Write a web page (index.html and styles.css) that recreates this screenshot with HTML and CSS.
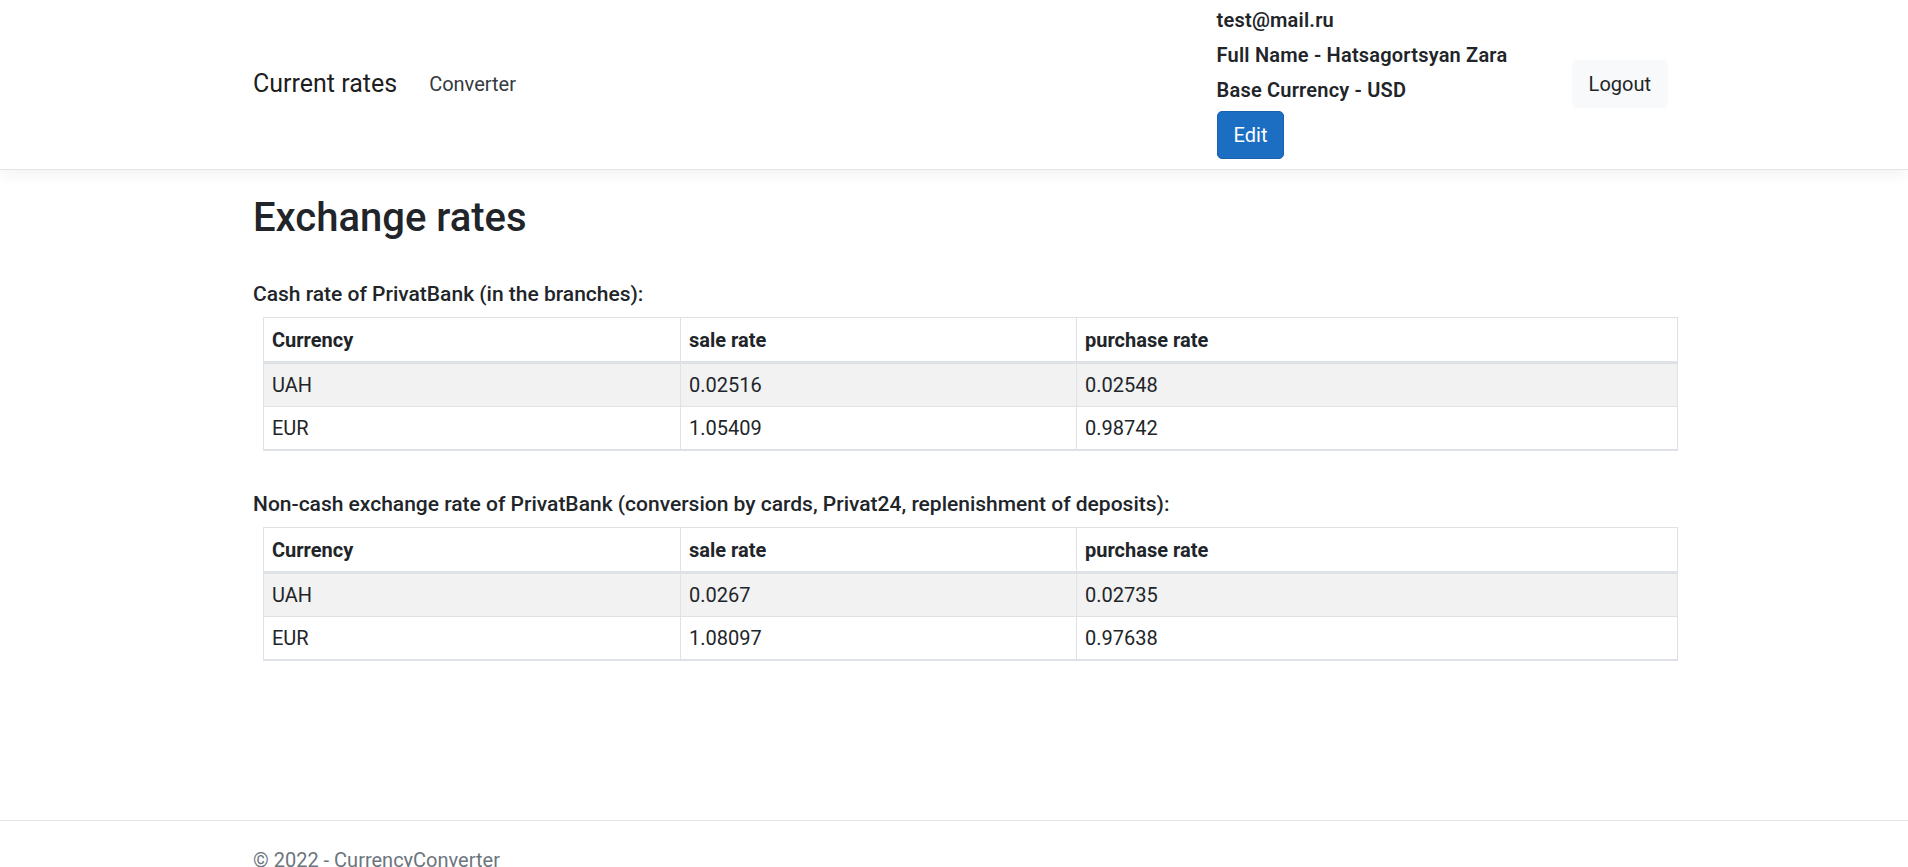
FILE: index.html
```html
<!DOCTYPE html>
<html lang="en">
<head>
<meta charset="utf-8">
<title>Exchange rates - CurrencyConverter</title>
<link rel="stylesheet" href="styles.css">
</head>
<body>
<div class="page">
  <header class="navbar">
    <div class="container nav-inner">
      <a class="brand" href="#">Current rates</a>
      <a class="nav-link" href="#">Converter</a>
      <div class="user">
        <div class="user-line">test@mail.ru</div>
        <div class="user-line">Full Name - Hatsagortsyan Zara</div>
        <div class="user-line">Base Currency - USD</div>
        <button class="btn btn-primary" type="button">Edit</button>
      </div>
      <button class="btn btn-light" type="button">Logout</button>
    </div>
  </header>

  <main class="container main">
    <h2 class="title">Exchange rates</h2>

    <p class="label">Cash rate of PrivatBank (in the branches):</p>
    <table class="rates">
      <thead>
        <tr><th class="c1">Currency</th><th class="c2">sale rate</th><th class="c3">purchase rate</th></tr>
      </thead>
      <tbody>
        <tr class="odd"><td>UAH</td><td>0.02516</td><td>0.02548</td></tr>
        <tr><td>EUR</td><td>1.05409</td><td>0.98742</td></tr>
      </tbody>
    </table>

    <p class="label">Non-cash exchange rate of PrivatBank (conversion by cards, Privat24, replenishment of deposits):</p>
    <table class="rates">
      <thead>
        <tr><th class="c1">Currency</th><th class="c2">sale rate</th><th class="c3">purchase rate</th></tr>
      </thead>
      <tbody>
        <tr class="odd"><td>UAH</td><td>0.0267</td><td>0.02735</td></tr>
        <tr><td>EUR</td><td>1.08097</td><td>0.97638</td></tr>
      </tbody>
    </table>
  </main>

  <footer class="footer">
    <div class="container">&copy; 2022 - CurrencyConverter</div>
  </footer>
</div>
</body>
</html>
```
FILE: styles.css
```css
html, body {
  margin: 0;
  padding: 0;
}
body {
  font-family: Roboto, "Liberation Sans", Arial, sans-serif;
  font-size: 20px;
  line-height: 30px;
  color: #212529;
  background: #fff;
}
.page {
  min-height: 899px;
  display: flex;
  flex-direction: column;
}
.container {
  box-sizing: border-box;
  width: 1448px;
  margin: 0 auto;
  padding: 0 0 0 23px;
}

/* navbar */
.navbar {
  padding: 8px 0 10px;
  border-bottom: 1px solid #e5e5e5;
  box-shadow: 0 5px 15px rgba(0, 0, 0, 0.05);
  background: #fff;
}
.nav-inner {
  display: flex;
  align-items: center;
  padding-right: 10px;
}
.brand {
  font-size: 25px;
  line-height: 37px;
  color: rgba(0, 0, 0, 0.9);
  text-decoration: none;
  margin-right: 32px;
}
.nav-link {
  font-size: 20px;
  color: #343a40;
  text-decoration: none;
}
.user {
  margin-left: auto;
  width: 355px;
  display: flex;
  flex-direction: column;
  align-items: flex-start;
}
.user-line {
  font-weight: 600;
  line-height: 24px;
  margin-bottom: 11px;
  white-space: nowrap;
  letter-spacing: 0.2px;
}
.user-line:nth-child(3) {
  margin-bottom: 9px;
}
.btn {
  font-family: inherit;
  font-size: 20px;
  line-height: 30px;
  border-radius: 5px;
  border: 1px solid transparent;
  cursor: pointer;
}
.btn-primary {
  color: #fff;
  background: #1b6ec2;
  border-color: #1861ac;
  padding: 8px 16px;
}
.btn-light {
  color: #212529;
  background: #f8f9fa;
  border-color: #f8f9fa;
  padding: 8px 16px;
}

/* main */
.main {
  flex: 1;
  padding-top: 24px;
}
.title {
  font-size: 40px;
  font-weight: 500;
  line-height: 48px;
  margin: 0 0 37px;
}
.label {
  font-size: 21px;
  font-weight: 500;
  line-height: 30px;
  margin: 0 0 8px;
  white-space: nowrap;
}
.rates {
  width: 1415px;
  margin: 0 0 38px 10px;
  border-collapse: collapse;
  table-layout: fixed;
}
.rates th,
.rates td {
  border: 1px solid #dee2e6;
  padding: 6px 6px 6px 8px;
  text-align: left;
  line-height: 30px;
  font-size: 20px;
}
.rates th {
  font-weight: 700;
  border-bottom-width: 3px;
  padding-top: 7px;
}
.rates tbody tr:last-child td {
  border-bottom-width: 2px;
}
.rates .odd td {
  background: #f2f2f2;
}
.c1 { width: 402px; }
.c2 { width: 381px; }
.c3 { width: auto; }

/* footer */
.footer {
  border-top: 1px solid #e5e5e5;
  color: #6c757d;
  line-height: 78px;
  white-space: nowrap;
}
```
